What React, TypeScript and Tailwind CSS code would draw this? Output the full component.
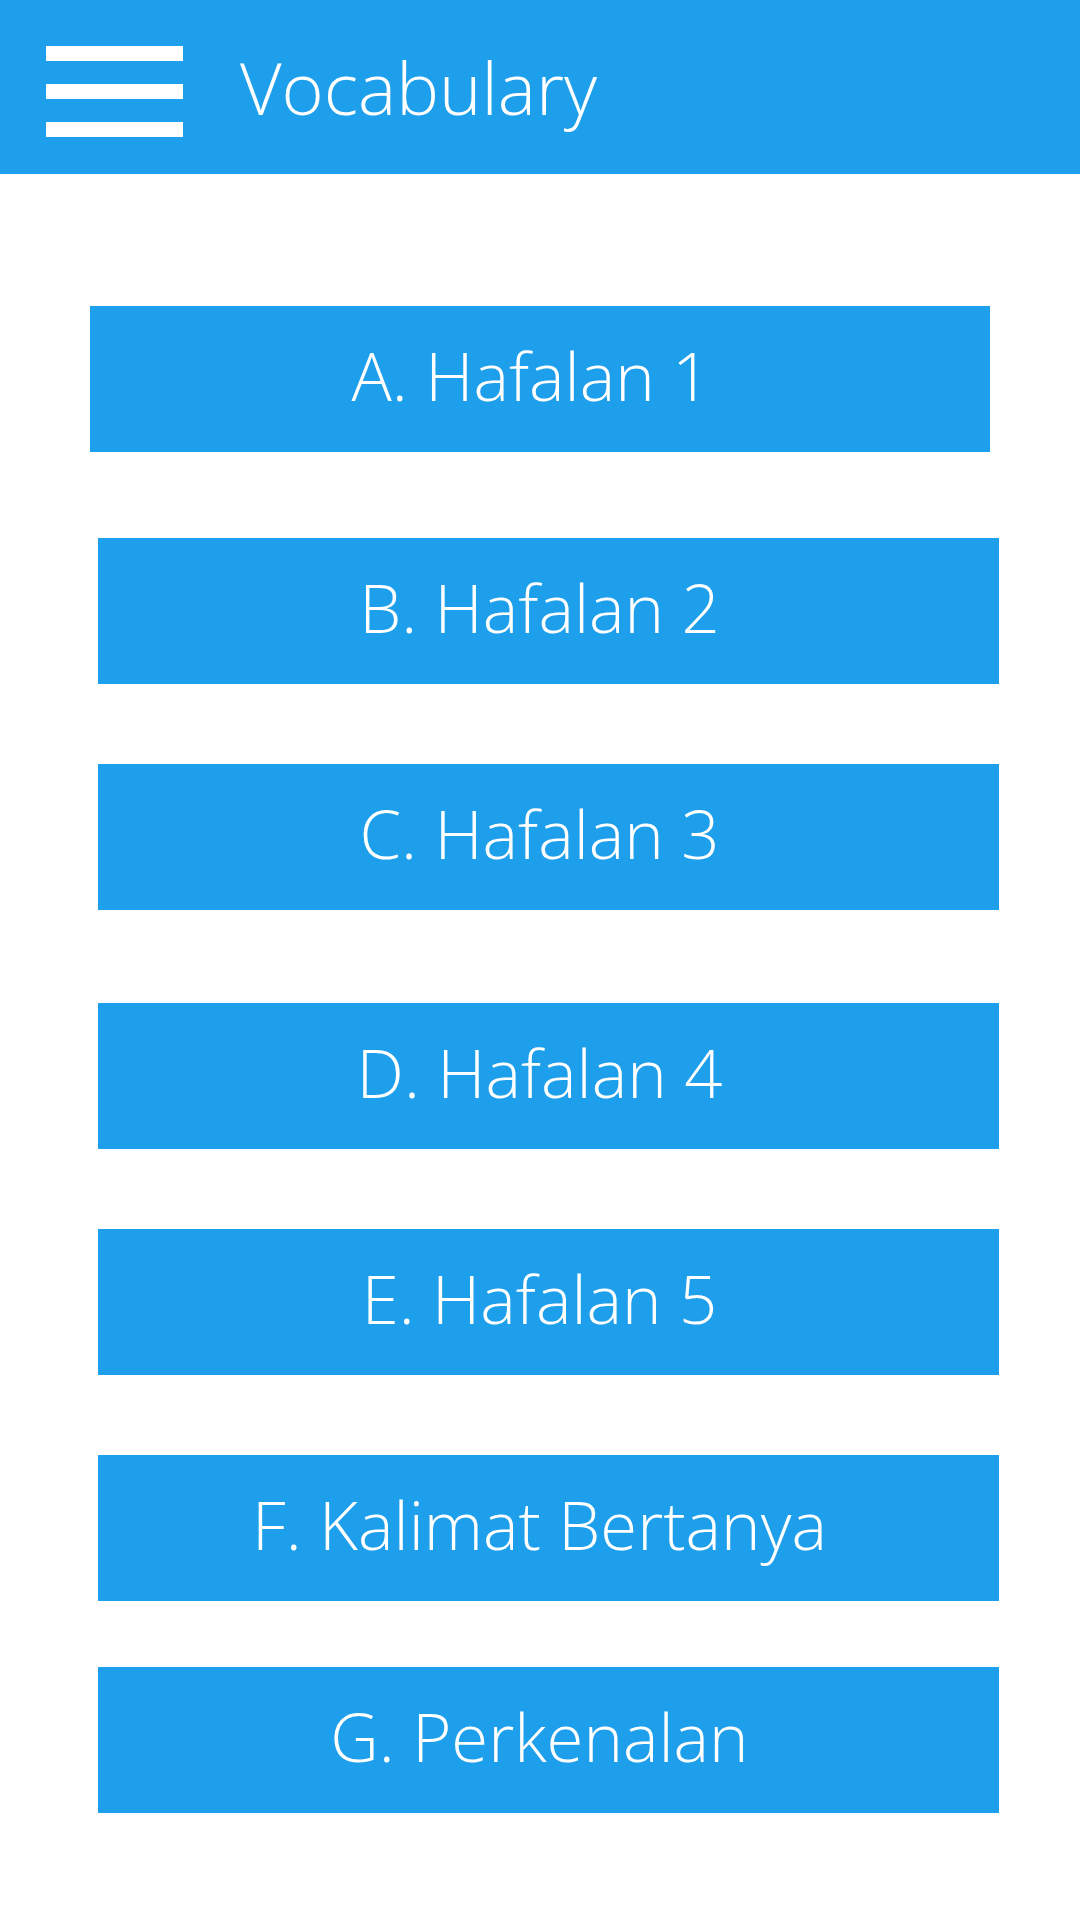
const items = [
  { label: 'A. Hafalan 1', cls: 'mt-[132px] ml-[90px] w-[900px]' },
  { label: 'B. Hafalan 2', cls: 'mt-[86px] ml-[98px] w-[901px]' },
  { label: 'C. Hafalan 3', cls: 'mt-[80px] ml-[98px] w-[901px]' },
  { label: 'D. Hafalan 4', cls: 'mt-[93px] ml-[98px] w-[901px]' },
  { label: 'E. Hafalan 5', cls: 'mt-[80px] ml-[98px] w-[901px]' },
  { label: 'F. Kalimat Bertanya', cls: 'mt-[80px] ml-[98px] w-[901px]' },
  { label: 'G. Perkenalan', cls: 'mt-[66px] ml-[98px] w-[901px]' },
]

function Header() {
  return (
    <header className="flex h-[174px] shrink-0 items-start bg-[#1e9fec]">
      <button type="button" className="ml-[46px] mt-[46px] flex flex-col gap-[23px]">
        <span className="block h-[15px] w-[137px] bg-white" />
        <span className="block h-[15px] w-[137px] bg-white" />
        <span className="block h-[15px] w-[137px] bg-white" />
      </button>
      <h1 className="ml-[57px] mt-[51px] text-[72px] leading-none font-light text-white">
        Vocabulary
      </h1>
    </header>
  )
}

export default function App() {
  return (
    <div className="flex min-h-[1920px] w-[1080px] flex-col bg-white font-['Open_Sans',sans-serif]">
      <Header />
      <main className="flex flex-col">
        {items.map((item) => (
          <button
            key={item.label}
            type="button"
            className={`flex h-[146px] items-center justify-center bg-[#1e9fec] pr-[18px] pb-[8px] text-[67px] leading-none font-light text-white ${item.cls}`}
          >
            {item.label}
          </button>
        ))}
      </main>
    </div>
  )
}
